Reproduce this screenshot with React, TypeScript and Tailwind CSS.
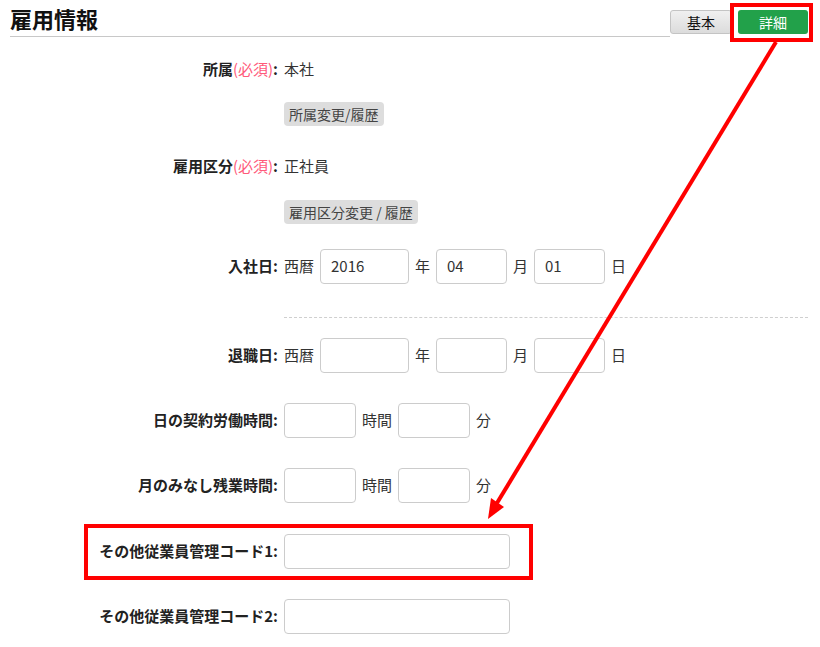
import React from "react";

const jp = { fontFamily: '"Noto Sans CJK JP", "Noto Sans", sans-serif' };

const Label = ({ children }: { children: React.ReactNode }) => (
  <div className="w-[278px] shrink-0 text-right text-[15px] font-bold text-[#222]">{children}</div>
);

const Box = ({ w = "w-[72px]", value = "" }: { w?: string; value?: string }) => (
  <div className={`${w} h-[35px] rounded-[4px] border border-[#cccccc] bg-white flex items-center px-[10px] text-[15px] text-[#333]`}>
    {value}
  </div>
);

const Unit = ({ children }: { children: React.ReactNode }) => (
  <span className="text-[15px] text-[#333] px-[6px]">{children}</span>
);

const DateRow = ({ label, y = "", m = "", d = "" }: { label: string; y?: string; m?: string; d?: string }) => (
  <div className="flex items-center h-[35px]">
    <Label>{label}</Label>
    <div className="flex items-center pl-[6px]">
      <span className="text-[15px] text-[#333] pr-[6px]">西暦</span>
      <Box w="w-[89px]" value={y} />
      <Unit>年</Unit>
      <Box w="w-[71px]" value={m} />
      <Unit>月</Unit>
      <Box w="w-[71px]" value={d} />
      <Unit>日</Unit>
    </div>
  </div>
);

const TimeRow = ({ label }: { label: string }) => (
  <div className="flex items-center h-[35px]">
    <Label>{label}</Label>
    <div className="flex items-center pl-[6px]">
      <Box w="w-[72px]" />
      <span className="text-[15px] text-[#333] px-[6px]">時間</span>
      <Box w="w-[72px]" />
      <Unit>分</Unit>
    </div>
  </div>
);

export default function App() {
  return (
    <div className="relative w-[820px] h-[647px] bg-white overflow-hidden" style={jp}>
      {/* header */}
      <div className="flex items-end pl-[10px] pr-[12px] pt-[4px]">
        <div className="flex-1 border-b border-[#c8c8c8] pb-[4px] h-[33px] flex items-center">
          <h1 className="text-[22px] font-bold text-[#111] leading-none">雇用情報</h1>
        </div>
        <div className="flex items-center gap-[6px] pb-[3px]">
          <button className="w-[62px] h-[24px] rounded-[3px] border border-[#c4c4c4] bg-gradient-to-b from-[#f0f0f0] to-[#dcdcdc] text-[14px] text-[#111]">
            基本
          </button>
          <button className="w-[70px] h-[24px] rounded-[3px] bg-[#22a14a] text-[14px] text-white">
            詳細
          </button>
        </div>
      </div>

      {/* form */}
      <div className="flex flex-col">
        <div className="flex items-center h-[24px] mt-[20px]">
          <Label>
            所属<span className="font-normal text-[#ff5a7a]">(必須)</span>:
          </Label>
          <span className="pl-[6px] text-[15px] text-[#333]">本社</span>
        </div>
        <div className="flex mt-[21px] pl-[284px]">
          <span className="h-[24px] px-[5px] rounded-[4px] bg-[#dddddd] text-[14px] text-[#444] flex items-center">
            所属変更/履歴
          </span>
        </div>
        <div className="flex items-center h-[24px] mt-[28px]">
          <Label>
            雇用区分<span className="font-normal text-[#ff5a7a]">(必須)</span>:
          </Label>
          <span className="pl-[6px] text-[15px] text-[#333]">正社員</span>
        </div>
        <div className="flex mt-[22px] pl-[284px]">
          <span className="h-[24px] px-[5px] rounded-[4px] bg-[#dddddd] text-[14px] text-[#444] flex items-center">
            雇用区分変更 / 履歴
          </span>
        </div>
        <div className="mt-[25px]">
          <DateRow label="入社日:" y="2016" m="04" d="01" />
        </div>
        <div className="mt-[33px] ml-[284px] mr-[12px] border-t border-dashed border-[#cfcfcf]" />
        <div className="mt-[20px]">
          <DateRow label="退職日:" />
        </div>
        <div className="mt-[30px]">
          <TimeRow label="日の契約労働時間:" />
        </div>
        <div className="mt-[30px]">
          <TimeRow label="月のみなし残業時間:" />
        </div>
        <div className="flex items-center h-[35px] mt-[31px]">
          <Label>その他従業員管理コード1:</Label>
          <div className="pl-[6px]">
            <Box w="w-[226px]" />
          </div>
        </div>
        <div className="flex items-center h-[35px] mt-[30px]">
          <Label>その他従業員管理コード2:</Label>
          <div className="pl-[6px]">
            <Box w="w-[226px]" />
          </div>
        </div>
      </div>

      {/* annotations */}
      <div className="absolute left-[730px] top-[3px] w-[83px] h-[39px] border-[4px] border-[#ff0000]" />
      <div className="absolute left-[84px] top-[524px] w-[449px] h-[56px] border-[4px] border-[#ff0000]" />
      <svg className="absolute left-0 top-0 pointer-events-none" width="820" height="647">
        <line x1="776" y1="42" x2="497" y2="503" stroke="#ff0000" strokeWidth="4" />
        <polygon points="488,519 504,507 491,498" fill="#ff0000" />
      </svg>
    </div>
  );
}
